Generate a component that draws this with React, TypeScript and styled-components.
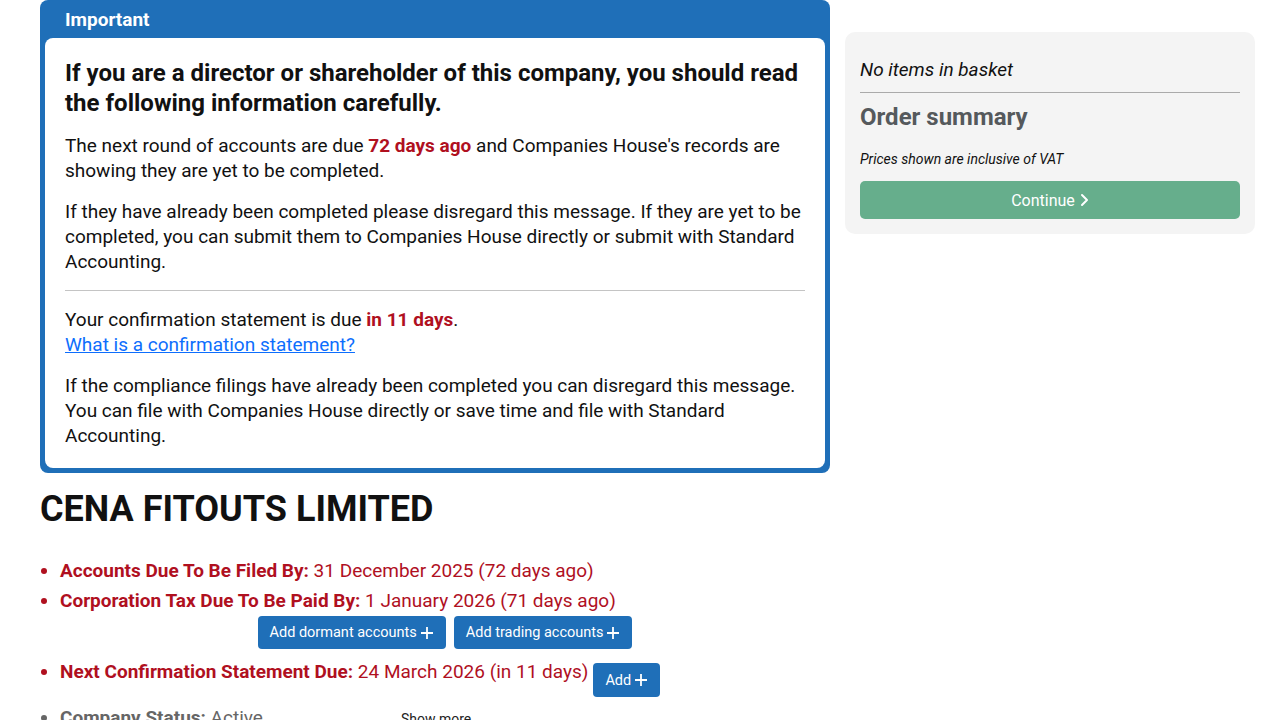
import styled, { createGlobalStyle } from "styled-components"

const GlobalStyle = createGlobalStyle`
    * { box-sizing: border-box; }
    body {
        margin: 0;
        background: #fff;
        font-family: Roboto, "Liberation Sans", sans-serif;
        color: #111;
    }
`

const Page = styled.div`
    display: grid;
    grid-template-columns: 790px 410px;
    column-gap: 15px;
    padding: 0 25px 0 40px;
    align-items: start;
`

const Principal = styled.main`
    display: flex;
    flex-direction: column;
`

const CaixaAviso = styled.section`
    background: #1f6fb8;
    border-radius: 8px;
    padding: 0 5px 5px;
`

const TituloAviso = styled.div`
    height: 38px;
    line-height: 40px;
    padding: 0 20px;
    color: #fff;
    font-size: 19px;
    font-weight: 700;
`

const CorpoAviso = styled.div`
    background: #fff;
    border-radius: 8px;
    padding: 20px;
`

const Destaque = styled.h2`
    margin: 0 0 15px;
    font-size: 24px;
    line-height: 30px;
    font-weight: 700;
`

const Paragrafo = styled.p`
    margin: 0 0 16px;
    font-size: 19px;
    line-height: 25px;

    &:last-child {
        margin-bottom: 0;
    }
`

const Vermelho = styled.strong`
    color: #b0101f;
    font-weight: 700;
`

const Linha = styled.hr`
    border: 0;
    border-top: 1px solid #c4c4c4;
    margin: 16px 0;
`

const Link = styled.a`
    color: #0d6efd;
    text-decoration: underline;
`

const NomeEmpresa = styled.h1`
    margin: 14px 0 0;
    font-size: 36px;
    line-height: 44px;
    font-weight: 700;
`

const Lista = styled.ul`
    margin: 25px 0 0;
    padding-left: 20px;
`

const Item = styled.li<{ $cinza?: boolean }>`
    font-size: 19px;
    line-height: 30px;
    color: ${p => p.$cinza ? '#666' : '#b0101f'};

    b {
        font-weight: 700;
    }
`

const LinhaBotoes = styled.div`
    display: flex;
    justify-content: center;
    gap: 8px;
    margin: 0 0 8px;
`

const Botao = styled.button`
    display: inline-flex;
    align-items: center;
    gap: 3px;
    height: 33px;
    padding: 0 12px;
    border: 0;
    border-radius: 4px;
    background: #1f6fb8;
    color: #fff;
    font-family: Roboto, "Liberation Sans", sans-serif;
    font-size: 14.5px;
    cursor: pointer;
`

const BotaoAdd = styled(Botao)`
    height: 34px;
    vertical-align: top;
    margin: 6px 0 0 5px;
`

const ItemStatus = styled(Item)`
    margin-top: 6px;

    span.mais {
        display: inline-block;
        margin-left: 138px;
        font-size: 14px;
        color: #222;
    }
`

const Lateral = styled.aside`
    margin-top: 32px;
    background: #f4f4f4;
    border-radius: 10px;
    padding: 15px;
`

const Cesto = styled.p`
    margin: 10px 0 0;
    font-size: 19px;
    line-height: 25px;
    font-style: italic;
`

const LinhaCinza = styled.hr`
    border: 0;
    border-top: 1px solid #aaa;
    margin: 10px 0 0;
`

const Resumo = styled.h3`
    margin: 9px 0 0;
    font-size: 24px;
    line-height: 30px;
    font-weight: 700;
    color: #55595c;
`

const Iva = styled.p`
    margin: 18px 0 0;
    font-size: 14px;
    line-height: 18px;
    font-style: italic;
`

const BotaoContinuar = styled.button`
    display: flex;
    align-items: center;
    justify-content: center;
    gap: 4px;
    width: 100%;
    height: 38px;
    margin-top: 13px;
    border: 0;
    border-radius: 5px;
    background: #66ae8c;
    color: #fff;
    font-family: Roboto, "Liberation Sans", sans-serif;
    font-size: 16px;
`

const Mais = () => (
    <svg width="14" height="14" viewBox="0 0 14 14" fill="none" stroke="currentColor" strokeWidth="1.8">
        <path d="M7 1v12M1 7h12" />
    </svg>
)

const Seta = () => (
    <svg width="10" height="14" viewBox="0 0 10 14" fill="none" stroke="currentColor" strokeWidth="2" strokeLinecap="round" strokeLinejoin="round">
        <path d="M3 2l5 5-5 5" />
    </svg>
)

const App = () => {
    return (
        <>
            <GlobalStyle />
            <Page>
                <Principal>
                    <CaixaAviso>
                        <TituloAviso>Important</TituloAviso>
                        <CorpoAviso>
                            <Destaque>If you are a director or shareholder of this company, you should read the following information carefully.</Destaque>
                            <Paragrafo>
                                The next round of accounts are due <Vermelho>72 days ago</Vermelho> and Companies House's records are showing they are yet to be completed.
                            </Paragrafo>
                            <Paragrafo>
                                If they have already been completed please disregard this message. If they are yet to be completed, you can submit them to Companies House directly or submit with Standard Accounting.
                            </Paragrafo>
                            <Linha />
                            <Paragrafo>
                                Your confirmation statement is due <Vermelho>in 11 days</Vermelho>.<br />
                                <Link href="#">What is a confirmation statement?</Link>
                            </Paragrafo>
                            <Paragrafo>
                                If the compliance filings have already been completed you can disregard this message. You can file with Companies House directly or save time and file with Standard Accounting.
                            </Paragrafo>
                        </CorpoAviso>
                    </CaixaAviso>

                    <NomeEmpresa>CENA FITOUTS LIMITED</NomeEmpresa>

                    <Lista>
                        <Item><b>Accounts Due To Be Filed By:</b> 31 December 2025 (72 days ago)</Item>
                        <Item>
                            <b>Corporation Tax Due To Be Paid By:</b> 1 January 2026 (71 days ago)
                            <LinhaBotoes>
                                <Botao>Add dormant accounts <Mais /></Botao>
                                <Botao>Add trading accounts <Mais /></Botao>
                            </LinhaBotoes>
                        </Item>
                        <Item>
                            <b>Next Confirmation Statement Due:</b> 24 March 2026 (in 11 days)
                            <BotaoAdd>Add <Mais /></BotaoAdd>
                        </Item>
                        <ItemStatus $cinza>
                            <b>Company Status:</b> Active
                            <span className="mais">Show more</span>
                        </ItemStatus>
                    </Lista>
                </Principal>

                <Lateral>
                    <Cesto>No items in basket</Cesto>
                    <LinhaCinza />
                    <Resumo>Order summary</Resumo>
                    <Iva>Prices shown are inclusive of VAT</Iva>
                    <BotaoContinuar>Continue <Seta /></BotaoContinuar>
                </Lateral>
            </Page>
        </>
    )
}

export default App
